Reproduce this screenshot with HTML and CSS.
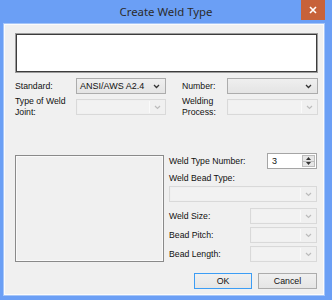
FILE: index.html
```html
<!DOCTYPE html>
<html lang="en">

<head>
  <meta charset="UTF-8" />
  <title>Create Weld Type</title>
  <link rel="stylesheet" href="styles.css">
</head>

<body>

  <div class="window">
    <!-- title bar -->
    <div class="titlebar">
      <span class="title">Create Weld Type</span>
      <span class="close">
        <svg width="8" height="8" viewBox="0 0 8 8"><path d="M1 1L7 7M7 1L1 7" stroke="#fff" stroke-width="1.6" /></svg>
      </span>
    </div>

    <div class="client">
      <div class="notes"></div>

      <div class="top-form">
        <label class="lbl">Standard:</label>
        <div class="combo">
          <span>ANSI/AWS A2.4</span>
          <svg class="chev" width="7" height="5" viewBox="0 0 7 5"><path d="M1 1L3.5 3.5L6 1" fill="none" stroke="#333" stroke-width="1.3" /></svg>
        </div>
        <label class="lbl second">Number:</label>
        <div class="combo">
          <span></span>
          <svg class="chev" width="7" height="5" viewBox="0 0 7 5"><path d="M1 1L3.5 3.5L6 1" fill="none" stroke="#333" stroke-width="1.3" /></svg>
        </div>

        <label class="lbl">Type of Weld<br>Joint:</label>
        <div class="combo disabled">
          <span class="field"></span>
          <svg class="chev" width="7" height="5" viewBox="0 0 7 5"><path d="M1 1L3.5 3.5L6 1" fill="none" stroke="#bcbcbc" stroke-width="1.2" /></svg>
        </div>
        <label class="lbl second">Welding<br>Process:</label>
        <div class="combo disabled">
          <span class="field"></span>
          <svg class="chev" width="7" height="5" viewBox="0 0 7 5"><path d="M1 1L3.5 3.5L6 1" fill="none" stroke="#bcbcbc" stroke-width="1.2" /></svg>
        </div>
      </div>

      <div class="lower">
        <div class="preview"></div>

        <div class="props">
          <div class="prop-row">
            <span>Weld Type Number:</span>
            <div class="spinner">
              <span class="value">3</span>
              <div class="spin">
                <span class="spin-btn"><svg width="5" height="3" viewBox="0 0 5 3"><path d="M0 3L2.5 0L5 3Z" fill="#333" /></svg></span>
                <span class="spin-btn"><svg width="5" height="3" viewBox="0 0 5 3"><path d="M0 0L2.5 3L5 0Z" fill="#333" /></svg></span>
              </div>
            </div>
          </div>

          <div class="caption">Weld Bead Type:</div>
          <div class="combo disabled bead">
            <span class="field"></span>
            <svg class="chev" width="7" height="5" viewBox="0 0 7 5"><path d="M1 1L3.5 3.5L6 1" fill="none" stroke="#bcbcbc" stroke-width="1.2" /></svg>
          </div>

          <div class="prop-row first">
            <span>Weld Size:</span>
            <div class="combo disabled short">
              <span class="field"></span>
              <svg class="chev" width="7" height="5" viewBox="0 0 7 5"><path d="M1 1L3.5 3.5L6 1" fill="none" stroke="#bcbcbc" stroke-width="1.2" /></svg>
            </div>
          </div>
          <div class="prop-row">
            <span>Bead Pitch:</span>
            <div class="combo disabled short">
              <span class="field"></span>
              <svg class="chev" width="7" height="5" viewBox="0 0 7 5"><path d="M1 1L3.5 3.5L6 1" fill="none" stroke="#bcbcbc" stroke-width="1.2" /></svg>
            </div>
          </div>
          <div class="prop-row">
            <span>Bead Length:</span>
            <div class="combo disabled short">
              <span class="field"></span>
              <svg class="chev" width="7" height="5" viewBox="0 0 7 5"><path d="M1 1L3.5 3.5L6 1" fill="none" stroke="#bcbcbc" stroke-width="1.2" /></svg>
            </div>
          </div>
        </div>
      </div>

      <div class="buttons">
        <button class="btn default">OK</button>
        <button class="btn cancel">Cancel</button>
      </div>
    </div>
  </div>

</body>

</html>
```

FILE: styles.css
```css
body {
  margin: 0;
  font-family: "Liberation Sans", Arial, sans-serif;
  font-size: 8.7px;
  color: #111;
}

.window {
  width: 332px;
  height: 300px;
  box-sizing: border-box;
  padding: 0 8px 8px 4px;
  background: #6b9ff5;
  display: flex;
  flex-direction: column;
}

/* title bar */
.titlebar {
  height: 24px;
  margin: 0 -8px 0 -4px;
  display: grid;
  grid-template-columns: 1fr 24px 7px;
  grid-template-rows: 24px;
}

.title {
  grid-column: 1 / -1;
  grid-row: 1;
  text-align: center;
  line-height: 24px;
  font-family: "Noto Sans", sans-serif;
  font-size: 11.4px;
  color: #2b2b2b;
}

.close {
  grid-column: 2;
  grid-row: 1;
  height: 20px;
  background: #c7623a;
  display: flex;
  align-items: center;
  justify-content: center;
}

/* dialog body */
.client {
  flex: 1;
  background: #f0f0f0;
  border: 1px solid #fbfbfb;
  box-shadow: 0 0 0 1px #a6c6f9;
  padding: 8px 5px 5px 10px;
  display: flex;
  flex-direction: column;
}

.notes {
  height: 40px;
  box-sizing: border-box;
  background: #fff;
  border: 1px solid #9c9c9c;
  box-shadow: inset 0 0 0 1px #3c3c3c;
}

.top-form {
  margin-top: 5px;
  display: grid;
  grid-template-columns: 61px 90px 61px 1fr;
  grid-auto-rows: 16px;
  row-gap: 5px;
}

.lbl {
  display: flex;
  align-items: center;
  line-height: 11px;
}

.lbl.second {
  padding-left: 16px;
}

.combo {
  box-sizing: border-box;
  height: 16px;
  border: 1px solid #acacac;
  background: linear-gradient(#efefef, #e4e4e4);
  display: flex;
  align-items: center;
  justify-content: space-between;
  padding: 0 5px 0 3px;
  font-size: 9px;
  color: #111;
}

.combo.disabled {
  border-color: #d9d9d9;
  background: #f0f0f0;
  padding: 1px 4px 1px 1px;
}

.combo .field {
  align-self: stretch;
  flex: 1;
  margin-right: 4px;
  background: #f2f2f2;
  border-right: 1px solid #fafafa;
}

/* lower half */
.lower {
  margin-top: 38px;
  display: grid;
  grid-template-columns: 149px 1fr;
  column-gap: 5px;
}

.preview {
  margin-top: 2px;
  height: 107px;
  box-sizing: border-box;
  border: 1px solid #8a8a8a;
  box-shadow: inset 0 0 0 1px #fafafa;
}

.props {
  margin-right: 1px;
  display: flex;
  flex-direction: column;
}

.prop-row {
  height: 16px;
  margin-bottom: 3px;
  display: flex;
  align-items: center;
  justify-content: space-between;
}

.prop-row:first-child {
  margin-bottom: 2px;
}

.prop-row.first {
  margin-top: 6px;
}

.caption {
  height: 14px;
  line-height: 14px;
}

.combo.bead {
  margin-top: 1px;
}

.combo.short {
  width: 67px;
}

.spinner {
  width: 50px;
  height: 16px;
  box-sizing: border-box;
  border: 1px solid #a5a5a5;
  background: #fff;
  display: flex;
}

.spinner .value {
  flex: 1;
  padding-left: 4px;
  line-height: 14px;
  font-size: 9px;
  color: #111;
}

.spin {
  width: 13px;
  padding: 1px 1px 1px 0;
  display: flex;
  flex-direction: column;
}

.spin-btn {
  flex: 1;
  border: 1px solid #bcbcbc;
  background: #e6e6e6;
  display: flex;
  align-items: center;
  justify-content: center;
}

.spin-btn + .spin-btn {
  border-top: none;
}

/* buttons */
.buttons {
  margin-top: 8px;
  padding-right: 1px;
  display: flex;
  justify-content: flex-end;
  gap: 6px;
}

.btn {
  height: 16px;
  padding: 0;
  font-family: "Liberation Sans", Arial, sans-serif;
  font-size: 8.8px;
  color: #111;
  border: 1px solid #acacac;
  background: linear-gradient(#f0f0f0, #e5e5e5);
}

.btn.default {
  width: 58px;
  border-color: #3c9df5;
}

.btn.cancel {
  width: 59px;
}
```
